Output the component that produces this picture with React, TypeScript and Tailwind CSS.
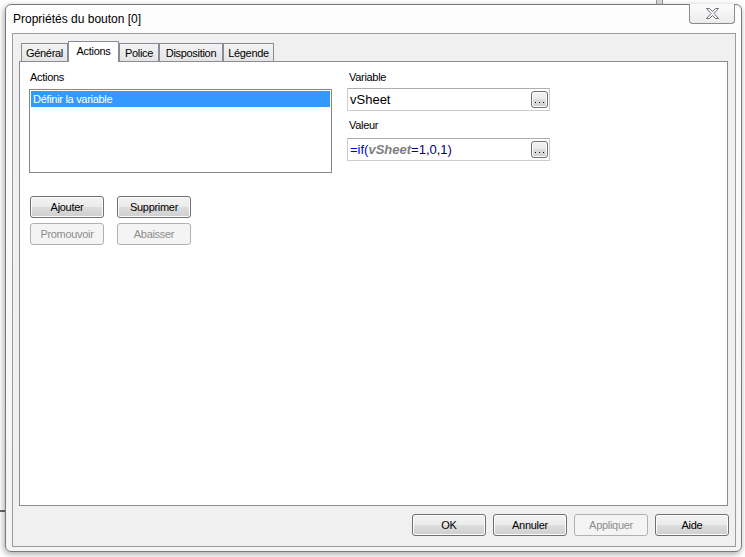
import React from "react";

const FONT = "font-['Liberation_Sans',Arial,sans-serif]";

function Btn({ label, disabled, w = "w-[74px]" }: { label: string; disabled?: boolean; w?: string }) {
  return (
    <div
      className={
        disabled
          ? `${w} h-[22px] shrink-0 rounded-[3px] border border-[#adb2b5] bg-[#f4f4f4] text-[#8d8d8d] flex items-center justify-center text-[11px] tracking-[-0.3px] leading-[13px]`
          : `${w} h-[22px] shrink-0 rounded-[3px] border border-[#707070] bg-[linear-gradient(#f2f2f2_0%,#ebebeb_50%,#dddddd_50%,#cfcfcf_100%)] shadow-[inset_0_0_0_1px_#fcfcfc] text-black flex items-center justify-center text-[11px] tracking-[-0.3px] leading-[13px]`
      }
    >
      {label}
    </div>
  );
}

function DotsButton() {
  return (
    <div className="w-[17px] h-[17px] rounded-[3px] border border-[#707070] bg-[linear-gradient(#f2f2f2_0%,#ebebeb_50%,#dddddd_50%,#cfcfcf_100%)] shadow-[inset_0_0_0_1px_#fcfcfc] flex items-end justify-center pb-[3px]">
      <svg width="9" height="2" viewBox="0 0 9 2">
        <rect x="0" y="0" width="1" height="1" fill="#000" />
        <rect x="4" y="0" width="1" height="1" fill="#000" />
        <rect x="8" y="0" width="1" height="1" fill="#000" />
      </svg>
    </div>
  );
}

function Tab({ label, w, selected }: { label: string; w: string; selected?: boolean }) {
  return selected ? (
    <div
      className={`${w} h-[21px] -mb-px relative z-10 border border-b-0 border-[#898c95] bg-white text-center text-[11px] tracking-[-0.3px] leading-[13px] pt-[3px] text-black`}
    >
      {label}
    </div>
  ) : (
    <div
      className={`${w} h-[18px] border border-b-0 border-[#898c95] bg-[linear-gradient(#f3f3f3,#e4e4e4)] text-center text-[11px] tracking-[-0.3px] leading-[13px] pt-[3px] text-black`}
    >
      {label}
    </div>
  );
}

export default function App() {
  return (
    <div className={`relative w-[745px] h-[557px] bg-white overflow-hidden pt-[4px] pl-[5px] ${FONT}`}>
      {/* desktop bits behind the window */}
      <div className="absolute left-[656px] top-0 w-[7px] h-[6px] border-x border-[#9a9a9a] bg-[#d8d8d8]" />
      <div className="absolute left-0 top-[510px] w-[7px] h-[2px] bg-[#6a6a6a]" />

      {/* window */}
      <div className="relative w-[737px] h-[548px] rounded-[6px] border border-[#7a7a7a] bg-[linear-gradient(#fdfdfd,#f4f4f4)] shadow-[-1px_2px_6px_rgba(0,0,0,0.35)] flex flex-col">
        {/* title bar */}
        <div className="h-[28px] shrink-0 pl-[7px] text-[12px] leading-[28px] text-black">
          Propriétés du bouton [0]
        </div>
        <div className="absolute right-[6px] top-[-1px] w-[46px] h-[20px] rounded-b-[4px] border border-t-0 border-[#8a8a8a] bg-[linear-gradient(#fbfbfb,#ececec)] flex items-center justify-center">
          <svg width="13" height="11" viewBox="-0.5 -0.5 13 11">
            <polygon
              points="0,0 3,0 6,3 9,0 12,0 7.5,5 12,10 9,10 6,7 3,10 0,10 4.5,5"
              fill="#ffffff"
              stroke="#6b6f78"
              strokeWidth="1"
              strokeLinejoin="round"
            />
          </svg>
        </div>

        {/* client frame */}
        <div className="ml-[6px] w-[724px] h-[514px] border border-[#9c9c9c] bg-[#f0f0f0] flex flex-col">
          {/* tabs + panel */}
          <div className="ml-[6px] w-[709px] flex flex-col">
            <div className="h-[27px] pt-[7px] flex items-end pl-[2px]">
              <Tab label="Général" w="w-[47px]" />
              <Tab label="Actions" w="w-[51px]" selected />
              <Tab label="Police" w="w-[40px]" />
              <Tab label="Disposition" w="w-[64px]" />
              <Tab label="Légende" w="w-[51px]" />
            </div>
            <div className="h-[445px] border border-[#898c95] bg-white pl-[9px] pt-[9px] flex gap-[15px]">
              {/* left column */}
              <div className="w-[303px] flex flex-col">
                <div className="ml-px text-[11px] tracking-[-0.3px] leading-[13px] text-black">Actions</div>
                <div className="mt-[5px] h-[84px] border border-[#828790] bg-white p-px">
                  <div className="h-[16px] bg-[#3399ff] pl-[2px] text-[11px] tracking-[-0.3px] leading-[16px] text-white">
                    Définir la variable
                  </div>
                </div>
                <div className="mt-[23px] ml-px flex flex-col gap-[5px]">
                  <div className="flex gap-[13px]">
                    <Btn label="Ajouter" />
                    <Btn label="Supprimer" />
                  </div>
                  <div className="flex gap-[13px]">
                    <Btn label="Promouvoir" disabled />
                    <Btn label="Abaisser" disabled />
                  </div>
                </div>
              </div>

              {/* right column */}
              <div className="w-[203px] flex flex-col">
                <div className="ml-[2px] text-[11px] tracking-[-0.3px] leading-[13px] text-black">Variable</div>
                <div className="mt-[4px] h-[23px] border border-[#c9ccd1] border-t-[#abadb3] bg-white flex items-center pl-[2px] pr-px">
                  <div className="flex-1 text-[13px] leading-[15px] text-black">vSheet</div>
                  <DotsButton />
                </div>
                <div className="mt-[8px] ml-[2px] text-[11px] tracking-[-0.3px] leading-[13px] text-black">Valeur</div>
                <div className="mt-[6px] h-[23px] border border-[#c9ccd1] border-t-[#abadb3] bg-white flex items-center pl-[2px] pr-px">
                  <div className="flex-1 text-[13px] leading-[15px]">
                    <span className="text-[#0000ff]">=if(</span>
                    <span className="text-[#808080] font-bold italic">vSheet</span>
                    <span className="text-[#00008b]">=1,0,1)</span>
                  </div>
                  <DotsButton />
                </div>
              </div>
            </div>
          </div>

          {/* bottom buttons */}
          <div className="mt-[8px] flex justify-end gap-[7px] pr-[6px]">
            <Btn label="OK" />
            <Btn label="Annuler" />
            <Btn label="Appliquer" disabled />
            <Btn label="Aide" />
          </div>
        </div>
      </div>
    </div>
  );
}
